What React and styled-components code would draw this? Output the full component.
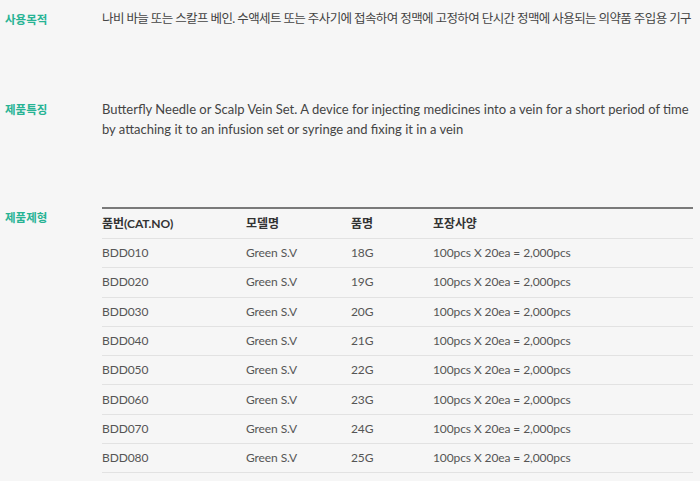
import styled, { createGlobalStyle } from "styled-components";

const GlobalStyle = createGlobalStyle`
  body {
    margin: 0;
    background: #f6f6f6;
    font-family: Lato, "Noto Sans CJK KR", sans-serif;
  }
`;

const Page = styled.div`
  padding: 9px 7px 0 5px;
`;

const Section = styled.section`
  display: grid;
  grid-template-columns: 97px 1fr;
  margin-bottom: ${(props) => props.gap || "70px"};
`;

const Label = styled.h3`
  margin: 0;
  padding-top: ${(props) => props.offset || "0"};
  font-family: "Noto Sans CJK KR", sans-serif;
  font-size: 11.5px;
  font-weight: 700;
  line-height: 20px;
  color: #27b394;
`;

const Text = styled.p`
  margin: 0;
  font-size: ${(props) => (props.ko ? "12.5px" : "13px")};
  line-height: 20px;
  color: #444;
  letter-spacing: ${(props) => (props.ko ? "-0.6px" : "0")};
  white-space: ${(props) => (props.ko ? "nowrap" : "normal")};
`;

const Table = styled.table`
  width: 100%;
  border-collapse: collapse;
  border-top: 2px solid #7a7a7a;
  font-size: 12px;
  letter-spacing: -0.1px;
  line-height: 1;
  color: #555;
`;

const Th = styled.th`
  width: ${(props) => props.w || "auto"};
  height: 29px;
  padding: 0;
  text-align: left;
  font-weight: 700;
  color: #333;
  border-bottom: 1px solid #e2e2e2;
`;

const Td = styled.td`
  height: 28.3px;
  padding: 0;
  border-bottom: 1px solid #e2e2e2;
`;

const rows = ["18G", "19G", "20G", "21G", "22G", "23G", "24G", "25G"].map(
  (gauge, i) => ({ cat: `BDD0${i + 1}0`, gauge })
);

export default function App() {
  return (
    <Page>
      <GlobalStyle />
      <Section>
        <Label>사용목적</Label>
        <Text ko>
          나비 바늘 또는 스칼프 베인. 수액세트 또는 주사기에 접속하여 정맥에 고정하여 단시간 정맥에 사용되는 의약품 주입용 기구
        </Text>
      </Section>
      <Section gap="68px">
        <Label offset="-2px">제품특징</Label>
        <Text>
          Butterfly Needle or Scalp Vein Set. A device for injecting medicines into a vein for a short period of time by
          attaching it to an infusion set or syringe and fixing it in a vein
        </Text>
      </Section>
      <Section gap="0">
        <Label>제품제형</Label>
        <Table>
          <thead>
            <tr>
              <Th w="144px">품번(CAT.NO)</Th>
              <Th w="105px">모델명</Th>
              <Th w="82px">품명</Th>
              <Th>포장사양</Th>
            </tr>
          </thead>
          <tbody>
            {rows.map((r) => (
              <tr key={r.cat}>
                <Td>{r.cat}</Td>
                <Td>Green S.V</Td>
                <Td>{r.gauge}</Td>
                <Td>100pcs X 20ea = 2,000pcs</Td>
              </tr>
            ))}
          </tbody>
        </Table>
      </Section>
    </Page>
  );
}
